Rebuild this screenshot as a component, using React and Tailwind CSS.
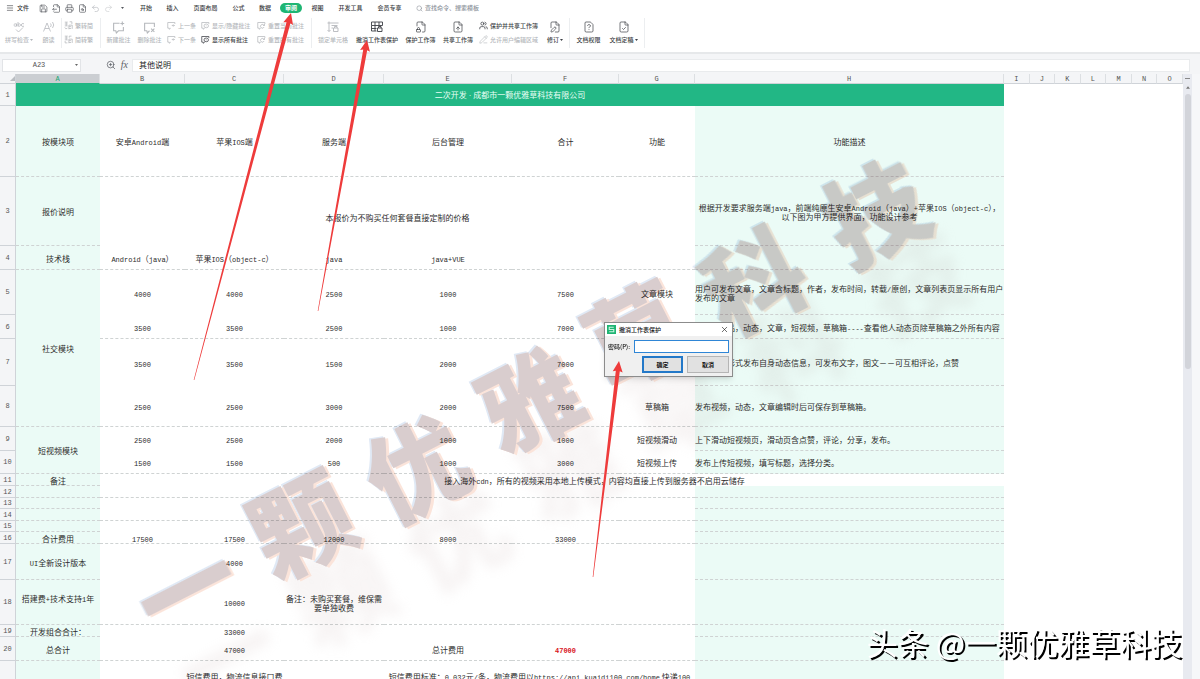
import React from "react";
import {
  Menu, Save, FileOutput, Printer, FileSearch, Undo2, Redo2, Search, ZoomIn, X,
  FileCheck, FileQuestion, FilePen, FileLock, FileUp, PencilLine, Users,
} from "lucide-react";

const TABS = [
  ["开始", "w-[26px]"], ["插入", "w-[27px]"], ["页面布局", "w-[39px]"], ["公式", "w-[27px]"], ["数据", "w-[26px]"],
  ["审阅", "w-[26px]"], ["视图", "w-[27px]"], ["开发工具", "w-[39px]"], ["会员专享", "w-[39px]"],
];

const COLS = ["A", "B", "C", "D", "E", "F", "G", "H", "I", "J", "K", "L", "M", "N", "O"];

const MINT = "bg-[#ebfbf6]";
const DASH = "border-b border-dashed border-[#cfd3d3]";

/* a = column A, m = columns B-G, h = column H; lines lists the parts that have a dashed bottom edge */
const ROWS = [
  { n: 2, size: "h-[71px]", lines: "amh", a: "按模块项", m: ["安卓Android端", "苹果IOS端", "服务端", "后台管理", "合计", "功能"], h: "功能描述", hCenter: true },
  { n: 3, size: "h-[69px]", lines: "ah", a: "报价说明", wide: { before: 0, span: 6, text: "本报价为不购买任何套餐直接定制的价格", pad: "pt-3" }, h: "根据开发要求服务端java，前端纯原生安卓Android（java）+苹果IOS（object-c），\n以下图为甲方提供界面，功能设计参考", hCenter: true },
  { n: 4, size: "h-[24px]", lines: "amh", a: "技术栈", m: ["Android（java）", "苹果IOS（object-c）", "java", "java+VUE", "", ""], h: "" },
  { n: 5, size: "h-[45px]", lines: "ah", a: "社交模块", aSpan: 4, m: ["4000", "4000", "2500", "1000", "7500", "文章模块"], h: "用户可发布文章，文章含标题，作者，发布时间，转载/原创，文章列表页显示所有用户\n发布的文章" },
  { n: 6, size: "h-[24px]", lines: "mh", a: null, m: ["3500", "3500", "2500", "1000", "7000", ""], h: "用户的作品，动态，文章，短视频，草稿箱----查看他人动态页除草稿箱之外所有内容" },
  { n: 7, size: "h-[47px]", lines: "h", a: null, m: ["3500", "3500", "1500", "2000", "7000", ""], h: "通过多种形式发布自身动态信息，可发布文字，图文－－可互相评论，点赞" },
  { n: 8, size: "h-[41px]", lines: "mh", a: null, m: ["2500", "2500", "3000", "2000", "7500", "草稿箱"], h: "发布视频，动态，文章编辑时后可保存到草稿箱。" },
  { n: 9, size: "h-[24px]", lines: "ah", a: "短视频模块", aSpan: 2, m: ["2500", "2500", "2000", "1000", "1000", "短视频滑动"], h: "上下滑动短视频页，滑动页含点赞，评论，分享，发布。" },
  { n: 10, size: "h-[23px]", lines: "mh", a: null, m: ["1500", "1500", "500", "1000", "3000", "短视频上传"], h: "发布上传短视频，填写标题，选择分类。" },
  { n: 11, size: "h-[12px]", lines: "a", a: "备注", wide: { before: 1, span: 6, text: "接入海外cdn，所有的视频采用本地上传模式，内容均直接上传到服务器不启用云储存", pad: "pt-px", overH: true } },
  { n: 12, size: "h-[12px]", lines: "amh", a: "", m: ["", "", "", "", "", ""], h: "" },
  { n: 13, size: "h-[11px]", lines: "ah", a: "", m: ["", "", "", "", "", ""], h: "" },
  { n: 14, size: "h-[12px]", lines: "amh", a: "", m: ["", "", "", "", "", ""], h: "" },
  { n: 15, size: "h-[11px]", lines: "ah", a: "", m: ["", "", "", "", "", ""], h: "" },
  { n: 16, size: "h-[12px]", lines: "amh", a: "合计费用", m: ["17500", "17500", "12000", "8000", "33000", ""], h: "" },
  { n: 17, size: "h-[36px]", lines: "ah", a: "UI全新设计版本", m: ["", "4000", "", "", "", ""], h: "" },
  { n: 18, size: "h-[45px]", lines: "amh", a: "搭建费+技术支持1年\n ", m: ["", "10000", "备注：未购买套餐，维保需\n要单独收费", "", "", ""], h: "" },
  { n: 19, size: "h-[12px]", lines: "ah", a: "开发组合合计：", m: ["", "33000", "", "", "", ""], h: "" },
  { n: 20, size: "h-[24px]", lines: "amh", a: "总合计", m: ["", "47000", "", "总计费用", "47000", ""], h: "" },
  { n: "", size: "h-[31px]", lines: "amh", a: "", m: ["", "短信费用，物流信息接口费", ""], wide: { before: 3, span: 3, text: "短信费用标准：0.032元/条，物流费用以https://api.kuaidi100.com/home 快递100", pad: "pt-px" }, h: "" },
];

function CommentIcon({ mark = "plus", className = "size-[11px]" }) {
  const marks = { plus: "M19 1v7M15.5 4.5h7", cross: "M15 14l6 6M21 14l-6 6", prev: "M14 12h7M14 12l3-3M14 12l3 3", eye: "M8 13a6 5 0 0 1 12 0 6 5 0 0 1-12 0M14 12v2", reset: "M19 12a5 5 0 1 0 0 4M20 8v4h-4" };
  const frame = mark === "plus" ? "M14 4H3v14h4l1 4 4-4h9v-7" : mark === "cross" ? "M12 18l-4 4-1-4H3V4h18v7" : "M10 19l-4 3v-3H2V4h19v4";
  return (
    <svg viewBox="0 0 24 24" className={className} fill="none" stroke="currentColor" strokeWidth="2" aria-hidden="true">
      <path d={frame} />
      <path d={marks[mark]} />
    </svg>
  );
}

function SpellIcon() {
  return (
    <svg viewBox="0 0 24 24" className="size-[12px]" fill="none" stroke="currentColor" strokeWidth="1.6" aria-hidden="true">
      <path d="M7 5v6M7 8a2.5 2.5 0 1 0 0 .1M10 2v9M10 8a2.5 2.5 0 1 1 0 .1M22 6a3 3 0 1 0 0 4" />
      <path d="M6 17l5 5 9-9" />
    </svg>
  );
}

function GridLock({ type = "lock" }) {
  return (
    <svg viewBox="0 0 24 24" className="h-[12px] w-[14px]" fill="none" stroke="currentColor" strokeWidth="1.8" aria-hidden="true">
      {type === "lock" ? <path d="M4 1v20M1 4h22M1 18l3 3 3-3M9 9h12M9 14h3" /> : <path d="M1 2h22v7H1zM8 2v18M16 2v7M1 9v11h10M1 15h10" />}
      <path d="M13 14h9v7h-9zM15 14v-3h5v3" />
    </svg>
  );
}

function Convert({ flip }) {
  return (
    <svg viewBox="0 0 24 24" className="size-[9px]" fill="none" stroke="currentColor" strokeWidth="2" aria-hidden="true">
      <path d="M2 3h8M2 8h8M6 3v10M2 13h8M13 11h9v10M13 15h6M13 20h6M13 11v11" />
      <path d={flip ? "M14 7V3h6M3 16v5h6" : "M15 2h6v6M2 17l3 4 4-2"} />
    </svg>
  );
}

function BigButton({ width, icon, label, on, caret }) {
  return (
    <button type="button" className={`flex shrink-0 flex-col items-center gap-[3px] ${width} ${on ? "text-[#3c3f45]" : "text-[#b5b8bc]"}`}>
      <span className="flex h-[12px] items-center">{icon}</span>
      <span className="flex items-center gap-px whitespace-nowrap">{label}{caret && <Caret />}</span>
    </button>
  );
}

function Caret() {
  return <svg viewBox="0 0 6 4" className="h-[2px] w-[3px]" aria-hidden="true"><path d="M0 0h6L3 4z" fill="currentColor" /></svg>;
}

function SmallPair({ width, items }) {
  return (
    <div className={`flex shrink-0 flex-col gap-[4px] ${width}`}>
      {items.map(([icon, label, on]) => (
        <button key={label} type="button" className={`flex h-[10px] items-center gap-[2px] whitespace-nowrap ${on ? "text-[#3c3f45]" : "text-[#b5b8bc]"}`}>
          {icon}{label}
        </button>
      ))}
    </div>
  );
}

function Divider() {
  return <span className="mx-[2px] h-[30px] w-px shrink-0 bg-[#eceef0]" />;
}

function Ribbon() {
  const ic = "size-[12px]";
  const sm = "size-[9px]";
  return (
    <div className="flex h-[36px] shrink-0 items-center bg-white pb-[3px] text-[6px] leading-[8px] font-medium">
      <BigButton width="w-[38px]" icon={<SpellIcon />} label="拼写检查" caret />
      <BigButton width="w-[21px]" icon={<svg viewBox="0 0 24 24" className={ic} fill="none" stroke="currentColor" strokeWidth="1.6"><path d="M1 21L8 4l7 17M4 15h8M15 5q3 3 0 7M19 2q5 6 0 12" /></svg>} label="朗读" />
      <Divider />
      <SmallPair width="w-[34px]" items={[[<Convert key="i" />, "繁转简"], [<Convert key="i" flip />, "简转繁"]]} />
      <Divider />
      <BigButton width="w-[31px]" icon={<CommentIcon className="size-[13px]" />} label="新建批注" />
      <BigButton width="w-[31px]" icon={<CommentIcon mark="cross" className="size-[13px]" />} label="删除批注" />
      <span className="w-[2px] shrink-0" />
      <SmallPair width="w-[34px]" items={[[<CommentIcon key="i" mark="prev" className={sm} />, "上一条"], [<CommentIcon key="i" mark="prev" className={sm} />, "下一条"]]} />
      <SmallPair width="w-[56px]" items={[[<CommentIcon key="i" mark="eye" className={sm} />, "显示/隐藏批注"], [<CommentIcon key="i" mark="eye" className={sm} />, "显示所有批注", true]]} />
      <SmallPair width="w-[52px]" items={[[<CommentIcon key="i" mark="reset" className={sm} />, "重置当前批注"], [<CommentIcon key="i" mark="reset" className={sm} />, "重置所有批注"]]} />
      <Divider />
      <BigButton width="w-[38px]" icon={<GridLock />} label="锁定单元格" />
      <BigButton width="w-[50px]" icon={<GridLock type="sheet" />} label="撤消工作表保护" on />
      <BigButton width="w-[37px]" icon={<FileLock className={ic} strokeWidth={1.4} />} label="保护工作簿" on />
      <BigButton width="w-[38px]" icon={<FileUp className={ic} strokeWidth={1.4} />} label="共享工作簿" on />
      <span className="w-[2px] shrink-0" />
      <SmallPair width="w-[64px]" items={[[<Users key="i" className={sm} strokeWidth={2} />, "保护并共享工作簿", true], [<PencilLine key="i" className={sm} strokeWidth={1.6} />, "允许用户编辑区域"]]} />
      <BigButton width="w-[24px]" icon={<FilePen className={ic} strokeWidth={1.4} />} label="修订" on caret />
      <Divider />
      <BigButton width="w-[33px]" icon={<FileQuestion className={ic} strokeWidth={1.4} />} label="文档权限" on />
      <BigButton width="w-[37px]" icon={<FileCheck className={ic} strokeWidth={1.4} />} label="文档定稿" on caret />
      <Divider />
    </div>
  );
}

function MenuBar() {
  const ic = "size-[9px]";
  return (
    <nav className="flex h-[16px] shrink-0 items-center bg-white text-[6px] leading-[8px] font-medium text-[#3a3d42]">
      <button type="button" className="flex w-[39px] items-center gap-[3px] pl-[6px]"><Menu className="size-[8px]" strokeWidth={1.8} />文件</button>
      <div className="flex w-[94px] items-center gap-[4px] text-[#55585e]">
        <button type="button" aria-label="保存"><Save className={ic} strokeWidth={1.8} /></button>
        <button type="button" aria-label="输出"><FileOutput className={ic} strokeWidth={1.8} /></button>
        <button type="button" aria-label="打印"><Printer className={ic} strokeWidth={1.8} /></button>
        <button type="button" aria-label="预览"><FileSearch className={ic} strokeWidth={1.8} /></button>
        <button type="button" aria-label="撤消" className="text-[#b9bcc0]"><Undo2 className={ic} strokeWidth={1.8} /></button>
        <button type="button" aria-label="恢复" className="text-[#cfd1d4]"><Redo2 className={ic} strokeWidth={1.8} /></button>
        <button type="button" aria-label="更多" className="pl-[4px]"><Caret /></button>
      </div>
      {TABS.map(([t, w]) => (
        <button key={t} type="button" className={`flex shrink-0 justify-center ${w}`}>
          {t === "审阅" ? <span className="rounded-full bg-[#1fb573] px-[5px] py-px font-bold text-white">{t}</span> : t}
        </button>
      ))}
      <label className="flex items-center gap-[2px] pl-[7px] text-[#8d939b]">
        <Search className="size-[7px]" strokeWidth={2} />
        <input aria-label="查找命令" placeholder="查找命令、搜索模板" className="w-[70px] bg-transparent outline-none placeholder:text-[#8d939b]" />
      </label>
    </nav>
  );
}

function FormulaBar() {
  return (
    <div className="flex h-[22px] shrink-0 items-center border-t-2 border-[#e6e8ea] bg-[#f4f5f7] pt-[2px] pr-[10px]">
      <div className="ml-[2px] flex h-[13px] w-[79px] items-center border border-[#e2e4e7] bg-white">
        <input aria-label="名称框" defaultValue="A23" className="w-full min-w-0 text-center font-['Liberation_Mono','Noto_Sans_CJK_SC',monospace] text-[7px] leading-[8px] text-[#555] outline-none" />
        <span className="pr-[2px] text-[#666]"><Caret /></span>
      </div>
      <div className="flex w-[51px] items-center justify-end gap-[5px] pr-[4px] text-[#5d6167]">
        <ZoomIn className="size-[10px]" strokeWidth={1.8} />
        <span className="font-['Liberation_Serif',serif] text-[10px] leading-[10px] italic">fx</span>
      </div>
      <input aria-label="编辑栏" defaultValue="其他说明" className="h-[13px] min-w-0 flex-1 border border-[#e9ebed] bg-white pb-[2px] pl-[6px] text-[8px] leading-[10px] text-[#222] outline-none" />
    </div>
  );
}

/* Latin runs are set in the narrow half-width face, the rest in the CJK face */
function Mixed({ text }) {
  return text.split(/([!-~]+)/).map((part, i) =>
    i % 2 ? <span key={i} className="font-['Liberation_Mono',monospace] text-[7px] leading-[1px]">{part}</span> : part
  );
}

function Cell({ text, className = "", pad = "pt-px", span = 1, rows = 1 }) {
  return (
    <td colSpan={span} rowSpan={rows} className={`px-0 pb-0 whitespace-pre ${text ? pad : "pt-0"} ${className}`}>{text && <Mixed text={text} />}</td>
  );
}

function Sheet() {
  return (
    <table className="w-full table-fixed border-separate border-spacing-0 bg-white text-center font-['Noto_Sans_CJK_SC',sans-serif] text-[8px] leading-[9px] text-[#2b2b2b]">
      <colgroup>
        <col className="w-[16px]" /><col className="w-[84px]" /><col className="w-[85px]" /><col className="w-[99px]" />
        <col className="w-[100px]" /><col className="w-[128px]" /><col className="w-[107px]" /><col className="w-[76px]" /><col className="w-[309px]" />
        <col /><col /><col /><col /><col /><col /><col />
      </colgroup>
      <thead>
        <tr className="h-[10px] bg-[#f4f5f7] font-['Liberation_Mono',monospace] text-[7px] leading-[8px] text-[#555]">
          <th className="border-r border-b border-[#cfd3d8] p-0">
            <svg viewBox="0 0 6 6" className="ml-auto size-[5px]" aria-hidden="true"><path d="M6 0v6H0z" fill="#b9bdc2" /></svg>
          </th>
          {COLS.map((c) => (
            <th key={c} scope="col" className={`border-r border-b p-0 pt-px font-normal ${c === "A" ? "border-r-[#dcdfe2] border-b-[#22b583] bg-[#cbced2] text-[#22a875]" : "border-r-[#dcdfe2] border-b-[#cfd3d8]"}`}>{c}</th>
          ))}
        </tr>
      </thead>
      <tbody>
        <tr className="h-[22px]">
          <RowHead n={1} />
          <td colSpan={8} className="bg-[#22b785] p-0 pt-px font-['Liberation_Serif','Noto_Sans_CJK_SC',serif] text-[#e9fff6]">二次开发 · 成都市一颗优雅草科技有限公司</td>
          <td colSpan={7} className="p-0" />
        </tr>
        {ROWS.map((r, i) => {
          const la = r.lines.includes("a") ? DASH : "";
          const lm = r.lines.includes("m") ? DASH : "";
          const lh = r.lines.includes("h") ? DASH : "";
          const plain = r.m || Array(r.wide.before).fill("");
          return (
            <tr key={i} className={r.size}>
              <RowHead n={r.n} />
              {r.a !== null && <Cell text={r.a} rows={r.aSpan || 1} className={`${MINT} ${la}`} />}
              {plain.map((t, k) => (
                <Cell key={k} text={t} className={`${lm} ${r.n === 20 && k === 4 ? "font-bold text-[#d8141c]" : ""}`} />
              ))}
              {r.wide && <Cell text={r.wide.text} span={r.wide.span} pad={r.wide.pad} className={lm} />}
              {!(r.wide && r.wide.overH) && <Cell text={r.h} className={`${MINT} ${lh} ${r.hCenter ? "text-center" : "text-left"}`} />}
              <td colSpan={7} className="p-0" />
            </tr>
          );
        })}
      </tbody>
    </table>
  );
}

function RowHead({ n }) {
  return (
    <th scope="row" className="border-r border-b border-[#cfd3d8] bg-[#f4f5f7] p-0 font-['Liberation_Mono',monospace] text-[7px] leading-[8px] font-normal text-[#555]">{n}</th>
  );
}

const BRAND = [
  ["一", 187, 590], ["颗", 302, 526], ["优", 417, 470], ["雅", 530, 402], ["草", 637, 336], ["科", 754, 282], ["技", 876, 214],
];

function BrandText({ dx, dy, fill }) {
  return (
    <g fill={fill} transform={`translate(${dx} ${dy})`}>
      {BRAND.map(([ch, x, y]) => (
        <text key={ch} textAnchor="middle" dy="37" transform={`translate(${x} ${y}) rotate(-27)`}>{ch}</text>
      ))}
    </g>
  );
}

function BrandMark() {
  return (
    <svg className="pointer-events-none absolute inset-0 h-full w-full mix-blend-multiply font-['Noto_Sans_CJK_SC',sans-serif] text-[100px] font-black" aria-hidden="true">
      <g className="opacity-25 blur-[6px]"><BrandText dx={40} dy={68} fill="#e0d3d3" /></g>
      <BrandText dx={-2} dy={-1} fill="#e0e9f5" />
      <BrandText dx={3} dy={1} fill="#fbe4da" />
      <BrandText dx={0} dy={0} fill="#d9cdce" />
    </svg>
  );
}

function arrow(tipX, tipY, tailX, tailY) {
  const len = Math.hypot(tailX - tipX, tailY - tipY);
  const ux = (tailX - tipX) / len;
  const uy = (tailY - tipY) / len;
  const at = (along, side) => `${tipX + ux * along - uy * side},${tipY + uy * along + ux * side}`;
  return [at(0, 0), at(11, 5), at(10, 2), at(len, 0.3), at(len, -0.3), at(10, -2), at(11, -5)].join(" ");
}

function Arrows() {
  return (
    <svg className="pointer-events-none absolute inset-0 h-full w-full" fill="#ee3b3b" aria-hidden="true">
      <polygon points={arrow(291, 13, 194, 380)} />
      <polygon points={arrow(367, 40, 318, 311)} />
      <polygon points={arrow(619, 361, 593, 577)} />
    </svg>
  );
}

function PasswordDialog() {
  return (
    <form role="dialog" aria-label="撤消工作表保护" className="absolute top-[322px] left-[604px] w-[129px] border border-[#8c8c8c] bg-[#f0f0f0] text-[6px] leading-[8px] font-medium text-[#111] shadow-md">
      <div className="flex h-[13px] items-center gap-[3px] bg-white px-[2px]">
        <svg viewBox="0 0 16 16" className="size-[9px]" aria-hidden="true"><rect width="16" height="16" fill="#1fb573" /><path d="M12 4H4v4h8v4H4" fill="none" stroke="#c9f3df" strokeWidth="2" /></svg>
        <span className="flex-1">撤消工作表保护</span>
        <button type="button" aria-label="关闭" className="mr-px"><X className="size-[9px]" strokeWidth={1.6} /></button>
      </div>
      <div className="flex items-center gap-[3px] px-[3px] pt-[4px]">
        <label htmlFor="pw" className="w-[23px] whitespace-nowrap">密码(P):</label>
        <input id="pw" type="password" className="h-[13px] min-w-0 flex-1 border border-[#2f86d6] bg-white px-[2px] outline-none" />
      </div>
      <div className="flex justify-end gap-[4px] px-[3px] pt-[3px] pb-[3px]">
        <button type="submit" className="h-[17px] w-[41px] border-2 border-[#2378c8] bg-[#e1e1e1] font-bold">确定</button>
        <button type="button" className="h-[17px] w-[42px] border border-[#b5b5b5] bg-[#e1e1e1] font-bold">取消</button>
      </div>
    </form>
  );
}

export default function App() {
  return (
    <div className="relative flex h-screen flex-col overflow-hidden bg-[#f4f5f7] font-['Noto_Sans_CJK_SC',sans-serif]">
      <MenuBar />
      <Ribbon />
      <FormulaBar />
      <div className="flex min-h-0 flex-1">
        <main className="min-w-0 flex-1 overflow-hidden"><Sheet /></main>
        <div className="flex w-[9px] flex-col items-center bg-[#e8eaf0] text-[#777]">
          <span className="mt-[4px] h-px w-[5px] bg-[#888]" />
          <svg viewBox="0 0 6 4" className="mt-[7px] h-[3px] w-[4px]" aria-hidden="true"><path d="M3 0l3 4H0z" fill="currentColor" /></svg>
          <span className="mt-[5px] h-[275px] w-[6px] rounded-full bg-[#d2d4da]" />
        </div>
        <div className="w-[8px] bg-[#f6f7f9]" />
      </div>
      <BrandMark />
      <PasswordDialog />
      <Arrows />
      <p className="absolute right-[18px] bottom-[17px] text-[31px] leading-[40px] whitespace-nowrap text-white [text-shadow:2px_2px_0_#000]">头条 @一颗优雅草科技</p>
    </div>
  );
}
